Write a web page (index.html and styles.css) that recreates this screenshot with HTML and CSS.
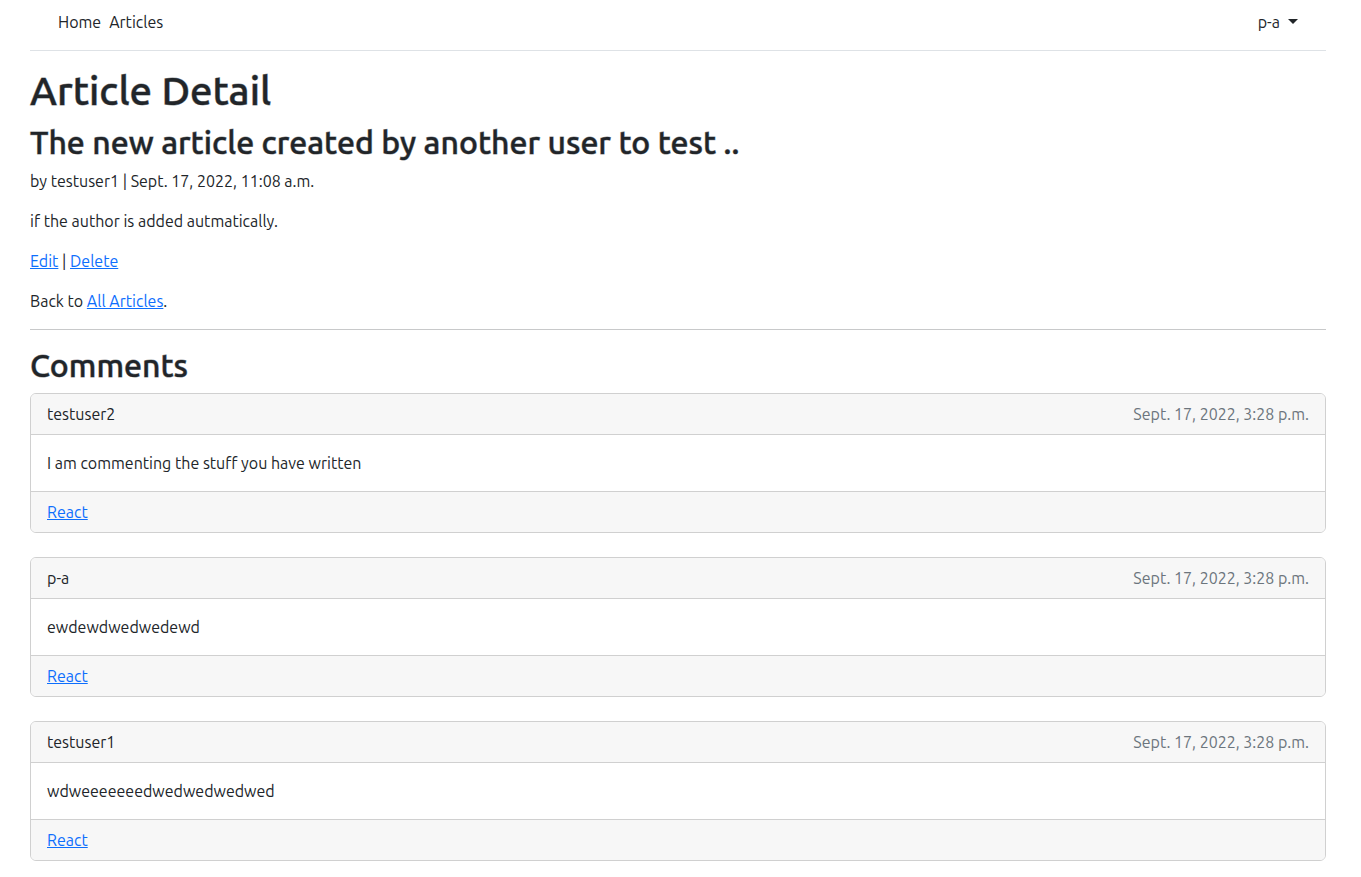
FILE: index.html
```html
<!DOCTYPE html>
<html lang="en">
<head>
<meta charset="utf-8">
<meta name="viewport" content="width=device-width, initial-scale=1">
<title>Article Detail</title>
<link rel="stylesheet" href="styles.css">
</head>
<body>
<div class="container">
  <header class="topbar">
    <nav class="nav">
      <a class="nav-link" href="#">Home</a>
      <a class="nav-link" href="#">Articles</a>
    </nav>
    <button class="user-menu" type="button" aria-haspopup="true">p-a<span class="caret"></span></button>
  </header>
  <main>
    <h1 class="page-title">Article Detail</h1>
    <article>
      <h2 class="heading">The new article created by another user to test ..</h2>
      <p class="text">by testuser1 | Sept. 17, 2022, 11:08 a.m.</p>
      <p class="text">if the author is added autmatically.</p>
      <p class="text"><a class="link" href="#">Edit</a> | <a class="link" href="#">Delete</a></p>
      <p class="text">Back to <a class="link" href="#">All Articles</a>.</p>
    </article>
    <hr class="divider">
    <section>
      <h2 class="heading">Comments</h2>
      <div class="comments">
        <article class="card">
          <header class="card-bar card-header"><span>testuser2</span><time class="muted">Sept. 17, 2022, 3:28 p.m.</time></header>
          <p class="card-body">I am commenting the stuff you have written</p>
          <footer class="card-bar card-footer"><a class="link" href="#">React</a></footer>
        </article>
        <article class="card">
          <header class="card-bar card-header"><span>p-a</span><time class="muted">Sept. 17, 2022, 3:28 p.m.</time></header>
          <p class="card-body">ewdewdwedwedewd</p>
          <footer class="card-bar card-footer"><a class="link" href="#">React</a></footer>
        </article>
        <article class="card">
          <header class="card-bar card-header"><span>testuser1</span><time class="muted">Sept. 17, 2022, 3:28 p.m.</time></header>
          <p class="card-body">wdweeeeeeedwedwedwedwed</p>
          <footer class="card-bar card-footer"><a class="link" href="#">React</a></footer>
        </article>
      </div>
    </section>
  </main>
</div>
</body>
</html>
```
FILE: styles.css
```css
* { box-sizing: border-box; }
body {
  margin: 0;
  background: #fff;
  color: #212529;
  font-family: Ubuntu, "Noto Sans", sans-serif;
  font-size: 16px;
  line-height: 24px;
}
.container { padding: 0 35px 16px 30px; }
.topbar {
  display: flex;
  justify-content: space-between;
  align-items: center;
  padding: 10px 28px 16px;
  border-bottom: 1px solid #dee2e6;
}
.nav { display: flex; gap: 8px; }
.nav-link { color: #212529; text-decoration: none; }
.user-menu {
  padding: 0;
  border: 0;
  background: none;
  color: inherit;
  font: inherit;
}
.caret {
  display: inline-block;
  margin-left: 8px;
  vertical-align: 4px;
  border-top: 5px solid #212529;
  border-left: 5px solid transparent;
  border-right: 5px solid transparent;
}
.page-title,
.heading {
  font-weight: 500;
  line-height: 1.2;
  -webkit-text-stroke: 1px rgb(33 37 41 / 50%);
}
.page-title { margin: 16px 0 8px; font-size: 40px; }
.heading { margin: 0 0 8px; font-size: 32px; }
.text { margin: 0 0 16px; }
.link { color: #0d6efd; text-decoration: underline; }
.divider { margin: 16px 0; border: 0; border-top: 1px solid #c8c9ca; }
.comments { display: grid; gap: 24px; }
.card { border: 1px solid #d0d0d0; border-radius: 6px; overflow: hidden; }
.card-bar { display: flex; justify-content: space-between; padding: 8px 16px; background: #f7f7f7; }
.card-header { border-bottom: 1px solid #d0d0d0; }
.card-footer { border-top: 1px solid #d0d0d0; }
.card-body { margin: 0; padding: 16px; }
.muted { color: #6c757d; }
```
